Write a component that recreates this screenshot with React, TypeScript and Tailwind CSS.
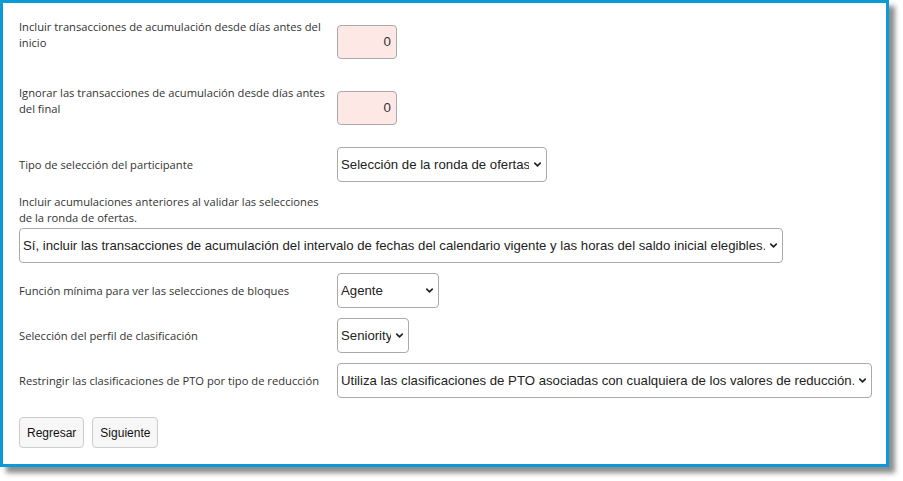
import { ChevronDown } from 'lucide-react'

const labelFont = { fontFamily: '"Open Sans", "Noto Sans", sans-serif' }

function Field({ label, children, className = '' }: { label: string; children: React.ReactNode; className?: string }) {
  return (
    <div className={`flex items-center ${className}`}>
      <div className="w-[318px] shrink-0 pr-[6px] text-[11.2px] leading-4 text-[#333]" style={labelFont}>
        {label}
      </div>
      {children}
    </div>
  )
}

function Select({ value, width }: { value: string; width: string }) {
  return (
    <div
      className={`flex h-[35px] items-center justify-between rounded border border-[#aaa] bg-white pl-[3px] pr-[3px] font-['Liberation_Sans',Arial,sans-serif] text-[13.2px] text-[#222] ${width}`}
    >
      <span className="min-w-0 overflow-hidden whitespace-nowrap">{value}</span>
      <ChevronDown size={11} strokeWidth={3.5} className="ml-[3px] shrink-0 text-[#222]" />
    </div>
  )
}

function NumberBox() {
  return (
    <div className="flex h-[34px] w-[60px] items-center justify-end rounded border border-[#aaa] bg-[#fde8e6] pr-[5px] font-['Liberation_Sans',Arial,sans-serif] text-[13.33px] text-[#333]">
      0
    </div>
  )
}

export default function App() {
  return (
    <div className="h-[481px] w-[903px] bg-white">
      <div className="h-[467px] w-[889px] border-[3px] border-[#0a9bd7] bg-white px-[16px] pt-[16px] shadow-[6px_6px_5px_rgba(0,0,0,0.45)]">
        {/* accrual window inputs */}
        <Field label="Incluir transacciones de acumulación desde días antes del inicio" className="!items-start">
          <div className="mt-[6px]">
            <NumberBox />
          </div>
        </Field>
        <Field label="Ignorar las transacciones de acumulación desde días antes del final" className="mt-[26px] !items-start">
          <div className="mt-[6px]">
            <NumberBox />
          </div>
        </Field>

        <Field label="Tipo de selección del participante" className="mt-[22px]">
          <Select value="Selección de la ronda de ofertas" width="w-[210px]" />
        </Field>

        {/* full-width prior accruals option */}
        <div className="mt-[12px]">
          <div className="w-[318px] pr-[6px] text-[11.2px] leading-4 text-[#333]" style={labelFont}>
            Incluir acumulaciones anteriores al validar las selecciones de la ronda de ofertas.
          </div>
          <div className="mt-[2px]">
            <Select
              value="Sí, incluir las transacciones de acumulación del intervalo de fechas del calendario vigente y las horas del saldo inicial elegibles."
              width="w-[764px]"
            />
          </div>
        </div>

        <Field label="Función mínima para ver las selecciones de bloques" className="mt-[10px]">
          <Select value="Agente" width="w-[102px]" />
        </Field>
        <Field label="Selección del perfil de clasificación" className="mt-[10px]">
          <Select value="Seniority" width="w-[72px]" />
        </Field>
        <Field label="Restringir las clasificaciones de PTO por tipo de reducción" className="mt-[10px]">
          <Select value="Utiliza las clasificaciones de PTO asociadas con cualquiera de los valores de reducción." width="w-[535px]" />
        </Field>

        <div className="mt-[19px] flex gap-2 font-['Liberation_Sans',Arial,sans-serif] text-[12px] text-[#111]">
          <button className="h-[31px] rounded border border-[#ccc] bg-[#f7f7f7] px-[7px]">Regresar</button>
          <button className="h-[31px] rounded border border-[#ccc] bg-[#f7f7f7] px-[7px]">Siguiente</button>
        </div>
      </div>
    </div>
  )
}
